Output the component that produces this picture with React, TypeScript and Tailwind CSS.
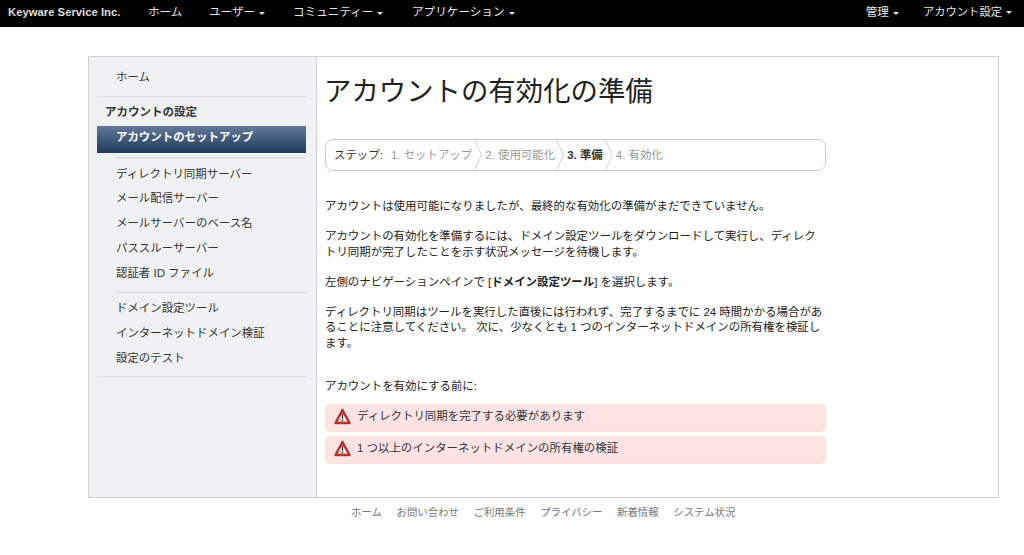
const FONT = "font-['Liberation_Sans','Noto_Sans_CJK_JP',sans-serif]";

function Caret() {
  return <span className="ml-1 inline-block h-0 w-0 border-x-[3px] border-t-[3px] border-x-transparent border-t-current align-middle" />;
}

function TopNav() {
  return (
    <nav className="flex h-[27px] items-center justify-between bg-black pb-[3px] pl-[8px] pr-[12px] text-[11.6px] text-[#e6e6e6]">
      <div className="flex items-center">
        <span className="w-[140px] text-[11.3px] font-bold text-[#dddddd]">Keyware Service Inc.</span>
        <span className="w-[61px]">ホーム</span>
        <span className="w-[84px]">ユーザー<Caret /></span>
        <span className="w-[119px]">コミュニティー<Caret /></span>
        <span>アプリケーション<Caret /></span>
      </div>
      <div className="flex items-center gap-[24px]">
        <span>管理<Caret /></span>
        <span className="text-[11.3px]">アカウント設定<Caret /></span>
      </div>
    </nav>
  );
}

function SideLink({ label }: { label: string }) {
  return <div className="flex h-[24.75px] items-center pl-[19px] text-[11.45px] text-[#333333]">{label}</div>;
}

function Sidebar() {
  return (
    <aside className="w-[228px] shrink-0 border-r border-[#cfd1d3] bg-[#f0f1f3] pl-[8px] pr-[10px] pt-[8px]">
      <SideLink label="ホーム" />
      <div className="mt-[6px] border-t border-[#dfe0e2]" />
      <div className="mt-[7px] h-[16px] pl-[8px] text-[11.5px] font-bold leading-[16px] text-[#333333]">アカウントの設定</div>
      <div className="mt-[6px] flex h-[27px] items-center bg-gradient-to-b from-[#64799a] to-[#1f3a5c] pb-[3px] pl-[19px] text-[11.45px] font-bold text-white">
        アカウントのセットアップ
      </div>
      <div className="ml-[18px] mt-[4px] border-t-2 border-[#dfe0e2]" />
      <div className="mt-[3px]">
        <SideLink label="ディレクトリ同期サーバー" />
        <SideLink label="メール配信サーバー" />
        <SideLink label="メールサーバーのベース名" />
        <SideLink label="パススルーサーバー" />
        <SideLink label="認証者 ID ファイル" />
      </div>
      <div className="ml-[18px] mt-[6px] border-t border-[#d6d7d9]" />
      <div className="mt-[4px]">
        <SideLink label="ドメイン設定ツール" />
        <SideLink label="インターネットドメイン検証" />
        <SideLink label="設定のテスト" />
      </div>
      <div className="mt-[5px] border-t border-[#dfe0e2]" />
    </aside>
  );
}

function Chevron() {
  return (
    <svg width="9" height="30" viewBox="0 0 9 30" className="mx-[2px] -mt-[1px] shrink-0">
      <path d="M0.5 0 L7.5 15 L0.5 30" fill="none" stroke="#d0d0d0" strokeWidth="1" />
    </svg>
  );
}

function Steps() {
  return (
    <div className="flex h-[32px] w-[501px] items-center overflow-hidden rounded-[8px] border border-[#cccccc] pl-[8px] pt-[1px] text-[11.45px] text-[#999999]">
      <span className="mr-[8px] text-[#333333]">ステップ:</span>
      <span>1. セットアップ</span>
      <Chevron />
      <span className="-mr-[1px]">2. 使用可能化</span>
      <Chevron />
      <span className="font-bold text-[#333333]">3. 準備</span>
      <Chevron />
      <span>4. 有効化</span>
    </div>
  );
}

function WarnIcon() {
  return (
    <svg width="17" height="17" viewBox="0 0 17 17" className="-mt-[1px] shrink-0">
      <path d="M8.5 2 L15.5 15 H1.5 Z" fill="#f3e4e0" stroke="#b5322a" strokeWidth="2.4" strokeLinejoin="round" />
      <path d="M7.6 5.5 h1.8 l-0.4 5.5 h-1 Z" fill="#444444" />
      <rect x="7.7" y="11.8" width="1.6" height="1.6" fill="#444444" />
    </svg>
  );
}

function Alert({ label }: { label: string }) {
  return (
    <div className="flex h-[28px] w-[501px] items-center gap-[6px] rounded-[5px] border border-[#f5dfe0] bg-[#fde3e4] pb-[2px] pl-[8px] text-[11.45px] text-[#333333]">
      <WarnIcon />
      <span>{label}</span>
    </div>
  );
}

function Main() {
  return (
    <main className="flex-1 pl-[8px] pt-[15px] text-[11.45px] leading-[15.5px] text-[#222222]">
      <h1 className="-ml-[1px] text-[27.4px] font-normal leading-[40px] text-[#222222]">アカウントの有効化の準備</h1>
      <div className="mt-[27px]">
        <Steps />
      </div>
      <div className="mt-[28px] w-[502px]">
        <p>アカウントは使用可能になりましたが、最終的な有効化の準備がまだできていません。</p>
        <p className="mt-[14.5px]">アカウントの有効化を準備するには、ドメイン設定ツールをダウンロードして実行し、ディレクトリ同期が完了したことを示す状況メッセージを待機します。</p>
        <p className="mt-[14.5px]">左側のナビゲーションペインで [<b>ドメイン設定ツール</b>] を選択します。</p>
        <p className="mt-[14.5px]">ディレクトリ同期はツールを実行した直後には行われず、完了するまでに 24 時間かかる場合があることに注意してください。 次に、少なくとも 1 つのインターネットドメインの所有権を検証します。</p>
        <p className="mt-[27.5px]">アカウントを有効にする前に:</p>
      </div>
      <div className="mt-[10px] flex flex-col gap-[4px]">
        <Alert label="ディレクトリ同期を完了する必要があります" />
        <Alert label="1 つ以上のインターネットドメインの所有権の検証" />
      </div>
    </main>
  );
}

function Footer() {
  return (
    <footer className="ml-[351px] mt-[7px] flex gap-[14.7px] text-[10.4px] leading-[16px] text-[#777777]">
      <span>ホーム</span>
      <span>お問い合わせ</span>
      <span>ご利用条件</span>
      <span>プライバシー</span>
      <span>新着情報</span>
      <span>システム状況</span>
    </footer>
  );
}

export default function App() {
  return (
    <div className={`h-[555px] w-[1024px] overflow-hidden bg-white ${FONT}`}>
      <TopNav />
      <div className="ml-[88px] mt-[29px] flex h-[442px] w-[911px] border border-[#cfd1d3]">
        <Sidebar />
        <Main />
      </div>
      <Footer />
    </div>
  );
}
